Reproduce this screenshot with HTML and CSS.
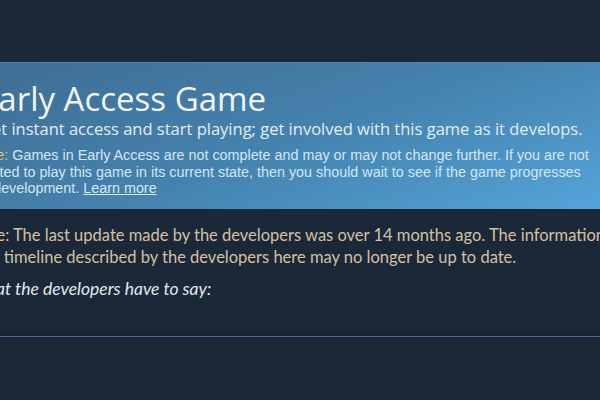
FILE: index.html
```html
<!DOCTYPE html>
<html lang="en">
<head>
  <meta charset="UTF-8">
  <meta name="viewport" content="width=device-width, initial-scale=1.0">
  <title>Early Access Game</title>
  <link rel="stylesheet" href="styles.css">
</head>
<body>
  <div class="page">
    <div class="ea-box">
      <div class="ea-inner">
        <h1 class="ea-title">Early Access Game</h1>
        <p class="ea-sub">Get instant access and start playing; get involved with this game as it develops.</p>
        <p class="ea-note">
          <span class="note-label">Note:</span> Games in Early Access are not complete and may or may not change further. If you are not<br>
          excited to play this game in its current state, then you should wait to see if the game progresses<br>
          <span class="wrap-line">in development. <a href="#" class="learn">Learn more</a></span>
        </p>
      </div>
    </div>

    <div class="dev-section">
      <p class="stale-notice">Note: The last update made by the developers was over 14 months ago. The information<br>
        <span class="wrap-line">and timeline described by the developers here may no longer be up to date.</span></p>
      <p class="dev-say">What the developers have to say:</p>
    </div>

    <div class="divider"></div>
  </div>
</body>
</html>
```

FILE: styles.css
```css
body {
  margin: 0;
  padding: 0;
  background-color: #1b2838;
  font-family: "Open Sans", sans-serif;
  overflow: hidden;
}
.page {
  width: 600px;
  height: 400px;
  padding-top: 62px;
  box-sizing: border-box;
}
.ea-box {
  height: 147px;
  box-sizing: border-box;
  border-top: 1px solid #5684aa;
  background: linear-gradient(160deg, #3f6e95 0%, #4482ae 50%, #54a4d8 100%);
  padding-top: 17px;
  overflow: hidden;
  white-space: nowrap;
}
.ea-inner {
  margin-left: -20px;
}
.ea-title {
  margin: 0;
  font-size: 33px;
  font-weight: normal;
  line-height: 38px;
  color: #f2f6fa;
}
.ea-sub {
  margin: 0;
  font-size: 16.5px;
  line-height: 22px;
  color: #e4edf5;
}
.ea-note {
  margin: 7px 0 0 -6px;
  font-family: "Liberation Sans", Arial, sans-serif;
  font-size: 14.35px;
  line-height: 16.5px;
  color: #d4e6f3;
}
.wrap-line {
  padding-left: 4px;
}
.note-label {
  color: #e9c46f;
}
.learn {
  color: #d4e9f7;
  text-decoration: underline;
}
.dev-section {
  margin-left: -31px;
  padding-top: 15px;
  height: 126px;
  box-sizing: border-box;
  white-space: nowrap;
  font-family: Lato, sans-serif;
}
.stale-notice {
  margin: 0;
  font-size: 16.5px;
  line-height: 22px;
  color: #d3c1a2;
}
.dev-say {
  margin: 10px 0 0 1px;
  font-size: 17.5px;
  font-style: italic;
  line-height: 22px;
  color: #e3e7ec;
}
.divider {
  height: 1px;
  margin-top: 1px;
  background: #4d6b8e;
  box-shadow: 0 -2px 3px #16203a, 0 3px 4px #18213a;
}
```
